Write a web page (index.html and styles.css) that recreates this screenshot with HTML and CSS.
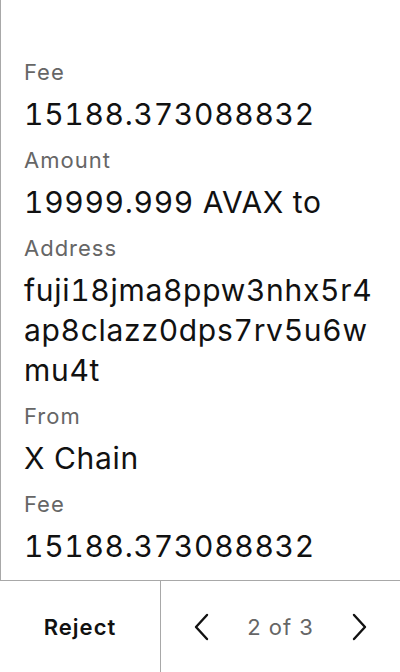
FILE: index.html
```html
<!DOCTYPE html>
<html>
<head>
<meta charset="utf-8">
<link rel="stylesheet" href="styles.css">
</head>
<body>
<div class="screen">
  <div class="content">
    <div class="label">Fee</div>
    <div class="value">15188.373088832</div>
    <div class="label">Amount</div>
    <div class="value">19999.999 AVAX to</div>
    <div class="label">Address</div>
    <div class="value">fuji18jma8ppw3nhx5r4ap8clazz0dps7rv5u6wmu4t</div>
    <div class="label">From</div>
    <div class="value">X Chain</div>
    <div class="label">Fee</div>
    <div class="value">15188.373088832</div>
  </div>
  <div class="footer">
    <div class="reject">Reject</div>
    <div class="pager">
      <svg class="chev" width="20" height="28" viewBox="0 0 20 28"><path d="M16 2 L5 14 L16 26" fill="none" stroke="#111" stroke-width="2.4" stroke-linecap="round" stroke-linejoin="round"/></svg>
      <span class="count">2 of 3</span>
      <svg class="chev" width="20" height="28" viewBox="0 0 20 28"><path d="M4 2 L15 14 L4 26" fill="none" stroke="#111" stroke-width="2.4" stroke-linecap="round" stroke-linejoin="round"/></svg>
    </div>
  </div>
</div>
</body>
</html>
```
FILE: styles.css
```css
html, body {
  margin: 0;
  padding: 0;
  background: #fff;
}
.screen {
  width: 400px;
  height: 672px;
  display: flex;
  flex-direction: column;
  font-family: Inter, "Noto Sans", sans-serif;
  color: #111;
}
.content {
  flex: 1;
  border-left: 1px solid #a8a8a8;
  padding: 58px 23px 0 23px;
  display: flex;
  flex-direction: column;
}
.label {
  font-size: 22px;
  line-height: 28px;
  letter-spacing: 1px;
  color: #666;
  margin-bottom: 8px;
}
.value {
  font-size: 30px;
  line-height: 40px;
  letter-spacing: 0.7px;
  font-feature-settings: "tnum";
  color: #111;
  word-break: break-all;
  margin-bottom: 12px;
}
.footer {
  height: 91px;
  border-top: 1px solid #a8a8a8;
  display: flex;
}
.reject {
  width: 160px;
  border-right: 1px solid #a8a8a8;
  display: flex;
  align-items: center;
  justify-content: center;
  font-weight: 600;
  font-size: 22px;
  letter-spacing: 1px;
}
.pager {
  flex: 1;
  display: flex;
  align-items: center;
  justify-content: space-between;
  padding: 0 30px;
}
.count {
  font-size: 22px;
  letter-spacing: 1px;
  color: #666;
}
```
